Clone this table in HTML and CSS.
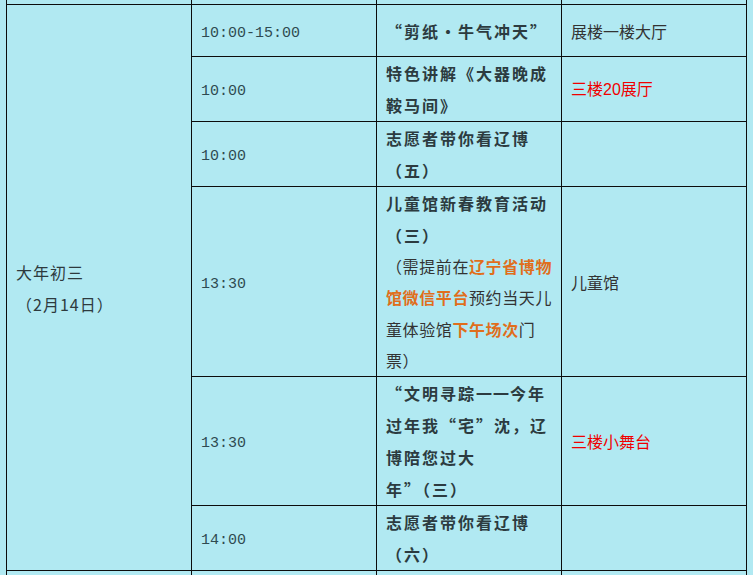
FILE: index.html
```html
<!DOCTYPE html>
<html lang="zh-CN">
<head>
<meta charset="utf-8">
<title>活动安排</title>
<link rel="stylesheet" href="styles.css">
</head>
<body>
<table class="sched">
  <colgroup>
    <col class="c"><col class="c"><col class="c"><col class="c">
  </colgroup>
  <tr class="partial"><td></td><td></td><td></td><td></td></tr>
  <tr class="r1">
    <td class="day" rowspan="6">大年初三<br>（2月14日）</td>
    <td class="time">10:00-15:00</td>
    <td class="title">“剪纸·牛气冲天”</td>
    <td class="place">展楼一楼大厅</td>
  </tr>
  <tr>
    <td class="time">10:00</td>
    <td class="title">特色讲解《大器晚成<br>鞍马间》</td>
    <td class="place red">三楼<span class="num">20</span>展厅</td>
  </tr>
  <tr>
    <td class="time">10:00</td>
    <td class="title">志愿者带你看辽博<br>（五）</td>
    <td class="place"></td>
  </tr>
  <tr>
    <td class="time">13:30</td>
    <td class="title">儿童馆新春教育活动<br>（三）<div class="note">（需提前在<b class="hl">辽宁省博物</b><br><b class="hl">馆微信平台</b>预约当天儿<br>童体验馆<b class="hl">下午场次</b>门<br>票）</div></td>
    <td class="place">儿童馆</td>
  </tr>
  <tr>
    <td class="time">13:30</td>
    <td class="title">“文明寻踪<span class="dash">一一</span>今年<br>过年我“宅”沈，辽<br>博陪您过大<br>年”（三）</td>
    <td class="place red">三楼小舞台</td>
  </tr>
  <tr>
    <td class="time">14:00</td>
    <td class="title">志愿者带你看辽博<br>（六）</td>
    <td class="place"></td>
  </tr>
  <tr class="tail"><td></td><td></td><td></td><td></td></tr>
</table>
</body>
</html>
```
FILE: styles.css
```css
html, body {
  margin: 0;
  padding: 0;
  background: #b1e9f2;
  overflow: hidden;
}
body {
  width: 753px;
  height: 575px;
  font-family: "Noto Sans CJK SC", "Liberation Sans", sans-serif;
  font-size: 16px;
  color: #333;
}
.sched {
  border-collapse: collapse;
  table-layout: fixed;
  width: 741px;
  margin-left: 6px;
  background: #b1e9f2;
}
.sched .c {
  width: 185px;
}
.sched td {
  border: 1px solid #0c0c0c;
  padding: 0 9px;
  line-height: 32px;
  vertical-align: middle;
  white-space: nowrap;
  overflow: hidden;
}
.sched .partial td {
  border-top: none;
  height: 4px;
  padding: 0;
  line-height: 0;
  font-size: 0;
}
.sched .tail td {
  border-bottom: none;
  height: 20px;
  padding: 0;
}
.sched .r1 td {
  padding-top: 10px;
  padding-bottom: 9px;
}
.sched .r1 td.day {
  padding-top: 0;
  padding-bottom: 0;
}
.sched td.time {
  padding-top: 6px;
  padding-bottom: 0;
}
.day {
  letter-spacing: 1px;
  color: #2e3a3e;
}
.time {
  font-family: "Liberation Mono", "DejaVu Sans Mono", monospace;
  font-size: 15px;
  color: #2f4a51;
}
.title {
  font-weight: 700;
  letter-spacing: 2px;
  color: #2c3b40;
  font-feature-settings: "fwid";
}
.dash {
  letter-spacing: 1px;
}
.note {
  font-weight: 400;
  letter-spacing: 0.6px;
  line-height: 31.25px;
  color: #333;
}
.hl {
  font-weight: 700;
  color: #e06e1c;
}
.place {
  color: #333;
}
.red {
  color: #f00000;
}
.num {
  font-family: "Liberation Sans", sans-serif;
  letter-spacing: 0;
}
```
